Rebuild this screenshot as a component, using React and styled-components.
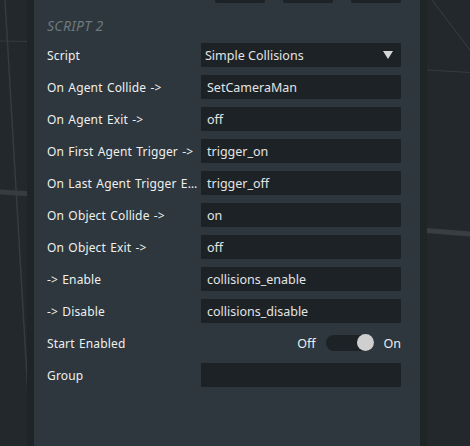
import React from 'react';
import styled, { createGlobalStyle } from 'styled-components';

const Global = createGlobalStyle`
  html, body { margin: 0; padding: 0; background: #23282c; }
  body { font-family: "Noto Sans", "Open Sans", sans-serif; }
`;

// viewport behind the panel
const Viewport = styled.div`
  position: relative;
  width: 470px;
  height: 446px;
  overflow: hidden;
  background: #23282c;
  display: flex;
`;

const Lines = styled.svg`
  position: absolute;
  left: 0;
  top: 0;
`;

const Panel = styled.section`
  position: relative;
  margin-left: 34px;
  width: 386px;
  height: 446px;
  background: #2d373d;
  box-shadow: -7px 0 0 #1f2427, 7px 0 0 #1f2427;
  padding: 0 19px 0 13px;
  box-sizing: border-box;
  display: flex;
  flex-direction: column;
`;

const TopButtons = styled.div`
  display: flex;
  justify-content: flex-end;
  gap: 18px;
`;

const TopButton = styled.div`
  width: 50px;
  height: 3px;
  background: #1d2326;
  border-radius: 0 0 2px 2px;
`;

const Heading = styled.h3`
  margin: 14px 0 0 0;
  height: 26px;
  font-size: 14px;
  font-style: italic;
  font-weight: 400;
  color: #6e787d;
  line-height: 18px;
  letter-spacing: 0.3px;
`;

const Rows = styled.div`
  display: flex;
  flex-direction: column;
  gap: 8px;
`;

const Row = styled.div`
  display: grid;
  grid-template-columns: 154px 200px;
  align-items: center;
  height: 24px;
`;

const Label = styled.div`
  font-size: 12px;
  color: #efefef;
  white-space: nowrap;
  overflow: hidden;
  text-overflow: ellipsis;
  padding-right: 2px;
  letter-spacing: 0.15px;
  word-spacing: 1px;
`;

const Field = styled.div`
  height: 24px;
  background: #1c2225;
  border-radius: 1px;
  display: flex;
  align-items: center;
  padding-left: ${p => (p.$select ? '4px' : '6px')};
  padding-right: 8px;
  box-sizing: border-box;
  font-size: 12.5px;
  color: #e4e4e4;
  justify-content: space-between;
`;

const Arrow = styled.span`
  width: 0;
  height: 0;
  border-left: 5px solid transparent;
  border-right: 5px solid transparent;
  border-top: 8px solid #d6d6d6;
`;

const ToggleWrap = styled.div`
  display: flex;
  align-items: center;
  justify-content: flex-end;
  gap: 10px;
  font-size: 12.5px;
  color: #ececec;
`;

const Track = styled.div`
  position: relative;
  width: 48px;
  height: 16px;
  border-radius: 8px;
  background: #1c2225;
`;

const Knob = styled.div`
  position: absolute;
  top: -1px;
  right: 0;
  width: 17px;
  height: 17px;
  border-radius: 50%;
  background: #cfcfcf;
`;

const fields = [
  ['On Agent Collide ->', 'SetCameraMan'],
  ['On Agent Exit ->', 'off'],
  ['On First Agent Trigger ->', 'trigger_on'],
  ['On Last Agent Trigger Exit ->', 'trigger_off'],
  ['On Object Collide ->', 'on'],
  ['On Object Exit ->', 'off'],
  ['-> Enable', 'collisions_enable'],
  ['-> Disable', 'collisions_disable'],
];

export default function App() {
  return (
    <>
      <Global />
      <Viewport>
        <Lines width="470" height="446">
          <line x1="5" y1="0" x2="31" y2="446" stroke="#363b40" strokeWidth="1.5" />
          <line x1="0" y1="41" x2="34" y2="41.5" stroke="#363b40" strokeWidth="1" />
          <line x1="0" y1="192" x2="34" y2="194" stroke="#373c41" strokeWidth="5" />
          <line x1="432" y1="0" x2="470" y2="50" stroke="#393e43" strokeWidth="1" />
          <line x1="420" y1="69.5" x2="470" y2="72.5" stroke="#363b40" strokeWidth="1" />
          <line x1="420" y1="230" x2="470" y2="234" stroke="#393e42" strokeWidth="5" />
        </Lines>
        <Panel>
          <TopButtons>
            <TopButton />
            <TopButton />
            <TopButton />
          </TopButtons>
          <Heading>SCRIPT 2</Heading>
          <Rows>
            <Row>
              <Label>Script</Label>
              <Field $select>
                Simple Collisions
                <Arrow />
              </Field>
            </Row>
            {fields.map(([label, value]) => (
              <Row key={label}>
                <Label>{label}</Label>
                <Field>{value}</Field>
              </Row>
            ))}
            <Row>
              <Label>Start Enabled</Label>
              <ToggleWrap>
                Off
                <Track>
                  <Knob />
                </Track>
                On
              </ToggleWrap>
            </Row>
            <Row>
              <Label>Group</Label>
              <Field />
            </Row>
          </Rows>
        </Panel>
      </Viewport>
    </>
  );
}
